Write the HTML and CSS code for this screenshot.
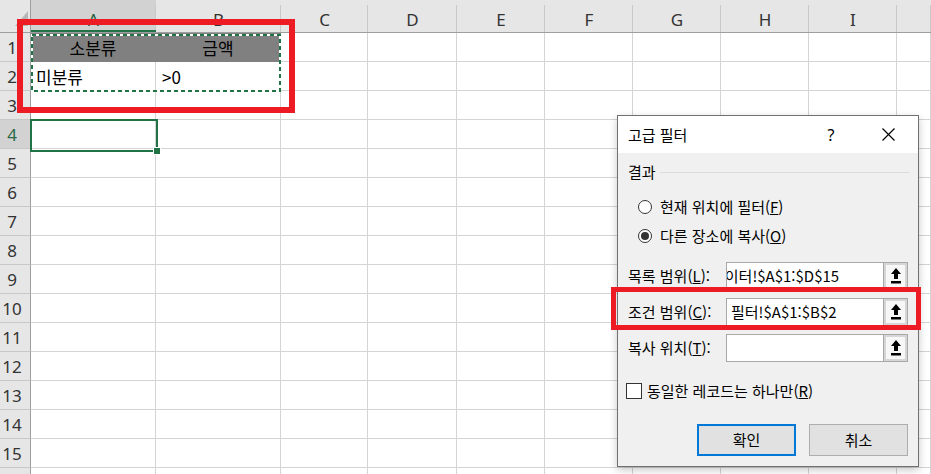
FILE: index.html
```html
<!DOCTYPE html>
<html lang="ko">
<head>
<meta charset="utf-8">
<title>고급 필터</title>
<link rel="stylesheet" href="styles.css">
</head>
<body>
<div class="sheet">
  <div class="grid">
    <div class="corner"><svg width="31" height="33" viewBox="0 0 31 33"><polygon points="28,11 28,26 15,26" fill="#b6b6b6"/></svg></div>
    <div class="ch sel">A</div><div class="ch">B</div><div class="ch">C</div><div class="ch">D</div><div class="ch">E</div><div class="ch">F</div><div class="ch">G</div><div class="ch">H</div><div class="ch">I</div><div class="ch"></div>

    <div class="rh">1</div><div class="c fill center">소분류</div><div class="c fill center last">금액</div><div class="c"></div><div class="c"></div><div class="c"></div><div class="c"></div><div class="c"></div><div class="c"></div><div class="c"></div><div class="c"></div>
    <div class="rh">2</div><div class="c">미분류</div><div class="c pad">&gt;0</div><div class="c"></div><div class="c"></div><div class="c"></div><div class="c"></div><div class="c"></div><div class="c"></div><div class="c"></div><div class="c"></div>
    <div class="rh">3</div><div class="c"></div><div class="c"></div><div class="c"></div><div class="c"></div><div class="c"></div><div class="c"></div><div class="c"></div><div class="c"></div><div class="c"></div><div class="c"></div>
    <div class="rh sel">4</div><div class="c"></div><div class="c"></div><div class="c"></div><div class="c"></div><div class="c"></div><div class="c"></div><div class="c"></div><div class="c"></div><div class="c"></div><div class="c"></div>
    <div class="rh">5</div><div class="c"></div><div class="c"></div><div class="c"></div><div class="c"></div><div class="c"></div><div class="c"></div><div class="c"></div><div class="c"></div><div class="c"></div><div class="c"></div>
    <div class="rh">6</div><div class="c"></div><div class="c"></div><div class="c"></div><div class="c"></div><div class="c"></div><div class="c"></div><div class="c"></div><div class="c"></div><div class="c"></div><div class="c"></div>
    <div class="rh">7</div><div class="c"></div><div class="c"></div><div class="c"></div><div class="c"></div><div class="c"></div><div class="c"></div><div class="c"></div><div class="c"></div><div class="c"></div><div class="c"></div>
    <div class="rh">8</div><div class="c"></div><div class="c"></div><div class="c"></div><div class="c"></div><div class="c"></div><div class="c"></div><div class="c"></div><div class="c"></div><div class="c"></div><div class="c"></div>
    <div class="rh">9</div><div class="c"></div><div class="c"></div><div class="c"></div><div class="c"></div><div class="c"></div><div class="c"></div><div class="c"></div><div class="c"></div><div class="c"></div><div class="c"></div>
    <div class="rh">10</div><div class="c"></div><div class="c"></div><div class="c"></div><div class="c"></div><div class="c"></div><div class="c"></div><div class="c"></div><div class="c"></div><div class="c"></div><div class="c"></div>
    <div class="rh">11</div><div class="c"></div><div class="c"></div><div class="c"></div><div class="c"></div><div class="c"></div><div class="c"></div><div class="c"></div><div class="c"></div><div class="c"></div><div class="c"></div>
    <div class="rh">12</div><div class="c"></div><div class="c"></div><div class="c"></div><div class="c"></div><div class="c"></div><div class="c"></div><div class="c"></div><div class="c"></div><div class="c"></div><div class="c"></div>
    <div class="rh">13</div><div class="c"></div><div class="c"></div><div class="c"></div><div class="c"></div><div class="c"></div><div class="c"></div><div class="c"></div><div class="c"></div><div class="c"></div><div class="c"></div>
    <div class="rh">14</div><div class="c"></div><div class="c"></div><div class="c"></div><div class="c"></div><div class="c"></div><div class="c"></div><div class="c"></div><div class="c"></div><div class="c"></div><div class="c"></div>
    <div class="rh">15</div><div class="c"></div><div class="c"></div><div class="c"></div><div class="c"></div><div class="c"></div><div class="c"></div><div class="c"></div><div class="c"></div><div class="c"></div><div class="c"></div>
    <div class="rh"></div><div class="c"></div><div class="c"></div><div class="c"></div><div class="c"></div><div class="c"></div><div class="c"></div><div class="c"></div><div class="c"></div><div class="c"></div><div class="c"></div>
  </div>

  <svg class="ants" width="250" height="58" viewBox="0 0 250 58">
    <rect x="1" y="1" width="248" height="56" fill="none" stroke="#ffffff" stroke-width="2"/>
    <rect x="1" y="1" width="248" height="56" fill="none" stroke="#217346" stroke-width="2" stroke-dasharray="4 3"/>
  </svg>
  <div class="active"><span class="handle"></span></div>
  <div class="mark mark1"></div>

  <div class="dialog">
    <div class="titlebar">
      <span class="title">고급 필터</span>
      <span class="help">?</span>
      <span class="close"><svg width="13" height="13" viewBox="0 0 13 13"><path d="M0.5 0.5 L12.5 12.5 M12.5 0.5 L0.5 12.5" stroke="#000" stroke-width="1.2" fill="none"/></svg></span>
    </div>
    <div class="dbody">
      <div class="group"><span>결과</span><span class="rule"></span></div>
      <div class="radios">
        <div class="radio"><span class="rbtn"></span><span>현재 위치에 필터(<u>F</u>)</span></div>
        <div class="radio"><span class="rbtn on"></span><span>다른 장소에 복사(<u>O</u>)</span></div>
      </div>
      <div class="fields">
        <div class="field">
          <span class="flabel">목록 범위(<u>L</u>):</span>
          <div class="ctrl"><div class="input"><span class="val scrolled">데이터!$A$1:$D$15</span></div><span class="pick"><svg width="14" height="18" viewBox="0 0 14 18"><path d="M7 1 L12 7 L9 7 L9 12 L5 12 L5 7 L2 7 Z" fill="#000"/><rect x="2" y="14" width="10" height="2.5" fill="#000"/></svg></span></div>
        </div>
        <div class="field">
          <span class="flabel">조건 범위(<u>C</u>):</span>
          <div class="ctrl"><div class="input"><span class="val">필터!$A$1:$B$2</span></div><span class="pick"><svg width="14" height="18" viewBox="0 0 14 18"><path d="M7 1 L12 7 L9 7 L9 12 L5 12 L5 7 L2 7 Z" fill="#000"/><rect x="2" y="14" width="10" height="2.5" fill="#000"/></svg></span></div>
        </div>
        <div class="field">
          <span class="flabel">복사 위치(<u>T</u>):</span>
          <div class="ctrl"><div class="input"></div><span class="pick"><svg width="14" height="18" viewBox="0 0 14 18"><path d="M7 1 L12 7 L9 7 L9 12 L5 12 L5 7 L2 7 Z" fill="#000"/><rect x="2" y="14" width="10" height="2.5" fill="#000"/></svg></span></div>
        </div>
      </div>
      <div class="check"><span class="cbox"></span><span>동일한 레코드는 하나만(<u>R</u>)</span></div>
      <div class="buttons"><span class="btn primary">확인</span><span class="btn">취소</span></div>
    </div>
  </div>
  <div class="mark mark2"></div>
</div>
</body>
</html>
```

FILE: styles.css
```css
html, body {
  margin: 0;
  padding: 0;
  width: 931px;
  height: 474px;
  overflow: hidden;
  background: #ffffff;
}

.sheet {
  position: relative;
  width: 931px;
  height: 474px;
  overflow: hidden;
}

.grid {
  display: grid;
  grid-template-columns: 31px 125px 125px 87px 89px 88px 88px 88px 88px 88px 1fr;
  grid-template-rows: 33px repeat(16, 29px);
  font-family: "Noto Sans CJK KR", "Noto Sans", sans-serif;
}

.corner {
  background: #e6e6e6;
  border-right: 1px solid #9e9e9e;
  border-bottom: 1px solid #9e9e9e;
  box-sizing: border-box;
  line-height: 0;
}

.ch {
  background-color: #e6e6e6;
  background-image: linear-gradient(#c8c8c8, #c8c8c8);
  background-size: 1px 27px;
  background-position: right bottom;
  background-repeat: no-repeat;
  border-bottom: 1px solid #9e9e9e;
  box-sizing: border-box;
  display: flex;
  justify-content: center;
  align-items: center;
  padding-top: 7px;
  font-family: "Noto Sans", "Open Sans", sans-serif;
  font-size: 17px;
  color: #333333;
}

.ch.sel {
  background-color: #d2d2d2;
  box-shadow: inset 0 -2px 0 #217346;
  color: #215a38;
}

.rh {
  background: #e6e6e6;
  border-right: 1px solid #9e9e9e;
  border-bottom: 1px solid #c8c8c8;
  box-sizing: border-box;
  display: flex;
  justify-content: center;
  align-items: flex-end;
  padding-right: 6px;
  padding-bottom: 2px;
  font-family: "Noto Sans", "Open Sans", sans-serif;
  font-size: 17px;
  line-height: 22px;
  color: #333333;
}

.rh.sel {
  background: #d2d2d2;
  color: #2a6a45;
}

.c {
  border-right: 1px solid #d4d4d4;
  border-bottom: 1px solid #d4d4d4;
  box-sizing: border-box;
  display: flex;
  align-items: flex-end;
  padding: 0 0 2px 5px;
  font-size: 17px;
  line-height: 22px;
  color: #000000;
}

.c.pad {
  padding-left: 6px;
}

.c.fill {
  background: #808080;
  border-right-color: #808080;
  border-bottom-color: #808080;
}

.c.center {
  justify-content: center;
  padding-left: 0;
}

.ants {
  position: absolute;
  left: 31px;
  top: 34px;
}

.active {
  position: absolute;
  left: 30px;
  top: 119px;
  width: 128px;
  height: 33px;
  border: 2px solid #217346;
  box-sizing: border-box;
}

.handle {
  position: absolute;
  right: -5px;
  bottom: -5px;
  width: 6px;
  height: 6px;
  background: #217346;
  border: 1px solid #ffffff;
}

.mark {
  position: absolute;
  border-style: solid;
  border-color: #ed1c24;
  box-sizing: border-box;
}

.mark1 {
  left: 17px;
  top: 19px;
  width: 278px;
  height: 94px;
  border-width: 6px;
}

.mark2 {
  left: 611px;
  top: 287px;
  width: 310px;
  height: 43px;
  border-width: 5px;
}

/* Dialog */
.dialog {
  position: absolute;
  left: 617px;
  top: 115px;
  width: 302px;
  height: 352px;
  box-sizing: border-box;
  border: 1px solid #707070;
  background: #f0f0f0;
  box-shadow: 0 3px 8px rgba(0, 0, 0, 0.22);
  font-family: "Noto Sans CJK KR", "Noto Sans", sans-serif;
  font-size: 15px;
  color: #000000;
  display: flex;
  flex-direction: column;
}

.titlebar {
  height: 37px;
  background: #ffffff;
  display: flex;
  align-items: center;
  padding: 0 12px 0 10px;
}

.title {
  flex: 1;
  line-height: 20px;
}

.help {
  width: 30px;
  text-align: center;
  font-family: "Noto Sans", sans-serif;
  font-size: 16px;
  margin-right: 24px;
}

.close {
  width: 36px;
  display: flex;
  justify-content: center;
  align-items: center;
}

.dbody {
  padding: 0 10px;
  display: flex;
  flex-direction: column;
}

.group {
  margin-top: 9px;
  height: 20px;
  display: flex;
  align-items: center;
  line-height: 20px;
}

.group .rule {
  flex: 1;
  height: 1px;
  background: #dcdcdc;
  margin-left: 4px;
  margin-right: -2px;
}

.radios {
  margin-top: 10px;
  padding-left: 10px;
  display: flex;
  flex-direction: column;
}

.radio {
  height: 29px;
  display: flex;
  align-items: center;
  gap: 8px;
  line-height: 20px;
}

.rbtn {
  width: 14px;
  height: 14px;
  box-sizing: border-box;
  border: 1px solid #333333;
  border-radius: 50%;
  background: #ffffff;
  display: flex;
  justify-content: center;
  align-items: center;
}

.rbtn.on::after {
  content: "";
  width: 8px;
  height: 8px;
  border-radius: 50%;
  background: #333333;
}

.fields {
  margin-top: 12px;
  display: flex;
  flex-direction: column;
  gap: 8px;
}

.field {
  display: flex;
  align-items: center;
  height: 28px;
}

.flabel {
  width: 98px;
  line-height: 20px;
  white-space: nowrap;
}

.ctrl {
  width: 182px;
  height: 28px;
  box-sizing: border-box;
  border: 1px solid #a8a8a8;
  display: flex;
}

.input {
  flex: 1;
  background: #ffffff;
  overflow: hidden;
  display: flex;
  align-items: center;
  white-space: nowrap;
}

.val {
  padding-left: 4px;
  line-height: 20px;
}

.val.scrolled {
  margin-left: -20px;
}

.pick {
  width: 24px;
  box-sizing: border-box;
  border-left: 1px solid #a8a8a8;
  background: #f7f7f7;
  box-shadow: inset 0 0 0 2px #d6d6d6;
  display: flex;
  justify-content: center;
  align-items: center;
}

.check {
  margin-top: 19px;
  margin-left: -2px;
  height: 20px;
  display: flex;
  align-items: center;
  gap: 5px;
  line-height: 20px;
}

.cbox {
  width: 16px;
  height: 16px;
  box-sizing: border-box;
  border: 1px solid #333333;
  background: #ffffff;
}

.buttons {
  margin-top: 23px;
  display: flex;
  justify-content: flex-end;
  gap: 13px;
  padding-right: 0;
}

.btn {
  width: 99px;
  height: 32px;
  box-sizing: border-box;
  border: 1px solid #adadad;
  background: #e1e1e1;
  display: flex;
  justify-content: center;
  align-items: center;
  line-height: 20px;
}

.btn.primary {
  border: 2px solid #0078d7;
}
```
